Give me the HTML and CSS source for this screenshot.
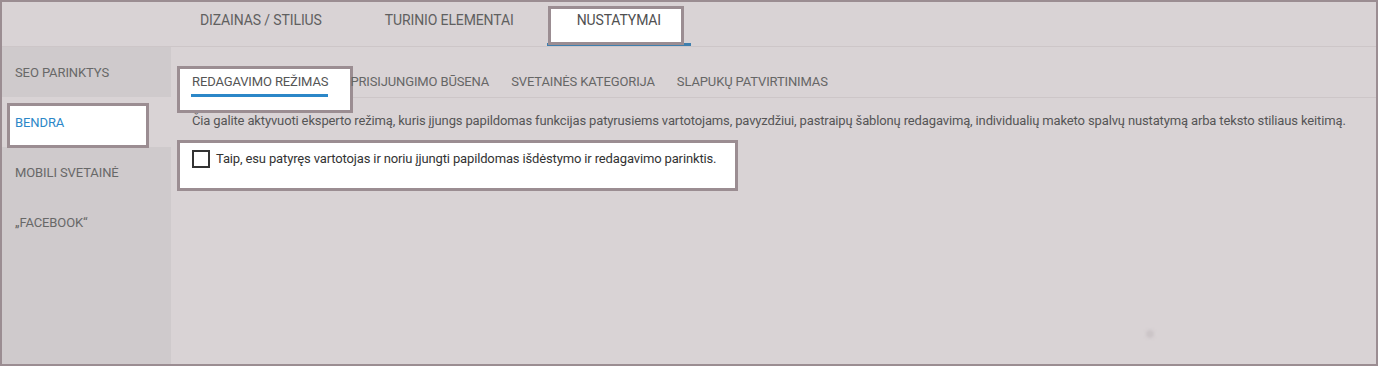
FILE: index.html
```html
<!DOCTYPE html>
<html lang="lt">
<head>
<meta charset="utf-8">
<title>Nustatymai</title>
<link rel="stylesheet" href="styles.css">
</head>
<body>
<div class="frame">
  <nav class="topnav">
    <a class="tab">DIZAINAS / STILIUS</a>
    <a class="tab">TURINIO ELEMENTAI</a>
    <a class="tab active"><span class="label">NUSTATYMAI</span></a>
  </nav>
  <div class="main">
    <aside class="sidebar">
      <a class="side-item">SEO PARINKTYS</a>
      <a class="side-item active"><span class="label">BENDRA</span></a>
      <a class="side-item">MOBILI SVETAINĖ</a>
      <a class="side-item">„FACEBOOK“</a>
    </aside>
    <section class="content">
      <div class="subtabs">
        <a class="subtab active"><span class="label">REDAGAVIMO REŽIMAS</span></a>
        <a class="subtab">PRISIJUNGIMO BŪSENA</a>
        <a class="subtab">SVETAINĖS KATEGORIJA</a>
        <a class="subtab">SLAPUKŲ PATVIRTINIMAS</a>
      </div>
      <p class="desc">Čia galite aktyvuoti eksperto režimą, kuris įjungs papildomas funkcijas patyrusiems vartotojams, pavyzdžiui, pastraipų šablonų redagavimą, individualių maketo spalvų nustatymą arba teksto stiliaus keitimą.</p>
      <label class="option">
        <span class="checkbox"></span>
        <span class="option-text">Taip, esu patyręs vartotojas ir noriu įjungti papildomas išdėstymo ir redagavimo parinktis.</span>
      </label>
    </section>
  </div>
  <span class="dot"></span>
</div>
</body>
</html>
```

FILE: styles.css
```css
* { box-sizing: border-box; }

html, body {
  margin: 0;
  padding: 0;
}

body {
  font-family: Roboto, "Liberation Sans", Arial, sans-serif;
  background: #d9d3d5;
}

.frame {
  position: relative;
  width: 1378px;
  height: 366px;
  border: 2px solid #9b8d92;
  background: #d9d3d5;
  display: flex;
  flex-direction: column;
  overflow: hidden;
}

/* top navigation */
.topnav {
  display: flex;
  height: 45px;
  padding-left: 168px;
  border-bottom: 1px solid #cdc6c8;
  flex: none;
}

.tab {
  position: relative;
  display: block;
  padding: 10px 30px 0;
  margin-right: 3px;
  height: 44px;
  font-size: 14px;
  line-height: 16px;
  letter-spacing: -0.12px;
  color: #606060;
  white-space: nowrap;
}

.tab.active {
  color: #505050;
  border-bottom: 3px solid #3f7fae;
}

.tab.active::before {
  content: "";
  position: absolute;
  left: 1px;
  right: 7px;
  top: 4px;
  height: 33px;
  background: #fff;
  border: 3px solid #9b8d92;
}

.label {
  position: relative;
  z-index: 1;
}

/* main */
.main {
  display: flex;
  flex: 1;
  min-height: 0;
}

.sidebar {
  width: 169px;
  flex: none;
  background: #cfcacc;
  display: flex;
  flex-direction: column;
}

.side-item {
  position: relative;
  display: flex;
  align-items: center;
  height: 50px;
  padding-left: 13px;
  padding-top: 1px;
  font-size: 13px;
  letter-spacing: -0.1px;
  color: #686868;
}

.side-item.active {
  background: #d9d3d5;
  color: #2b87c8;
}

.side-item.active::before {
  content: "";
  position: absolute;
  left: 5px;
  top: 6px;
  width: 136px;
  height: 39px;
  background: #fff;
  border: 3px solid #9b8d92;
}

.content {
  flex: 1;
  padding-left: 6px;
}

.subtabs {
  display: flex;
  gap: 22px;
  padding-left: 14px;
  margin-top: 19px;
  border-bottom: 1px solid #cdc6c8;
}

.subtab {
  position: relative;
  display: block;
  padding: 8px 0 7px;
  font-size: 13px;
  line-height: 16px;
  letter-spacing: -0.13px;
  color: #666;
  white-space: nowrap;
}

.subtab.active {
  color: #555;
  padding-left: 1px;
}

.subtab.active::before {
  content: "";
  position: absolute;
  left: -14px;
  top: 0;
  width: 170px;
  height: 41px;
  background: #fff;
  border: 3px solid #9b8d92;
}

.subtab.active::after {
  content: "";
  position: absolute;
  left: 0;
  right: 0;
  bottom: 0;
  height: 3px;
  background: #2b87c8;
  z-index: 1;
}

.desc {
  margin: 15px 0 0;
  padding-left: 15px;
  font-size: 13px;
  line-height: 16px;
  letter-spacing: -0.14px;
  color: #555;
  white-space: nowrap;
}

.option {
  display: flex;
  align-items: flex-start;
  width: 561px;
  height: 51px;
  margin-top: 11px;
  padding: 7px 12px;
  background: #fff;
  border: 3px solid #9b8d92;
}

.checkbox {
  width: 18px;
  height: 18px;
  flex: none;
  border: 2px solid #333;
  background: #fff;
}

.option-text {
  margin-left: 6px;
  font-size: 13px;
  line-height: 18px;
  letter-spacing: -0.14px;
  color: #333;
  white-space: nowrap;
}

.dot {
  position: absolute;
  left: 1144px;
  top: 328px;
  width: 8px;
  height: 8px;
  border-radius: 50%;
  background: #cbc4c7;
  filter: blur(1.5px);
}
```
